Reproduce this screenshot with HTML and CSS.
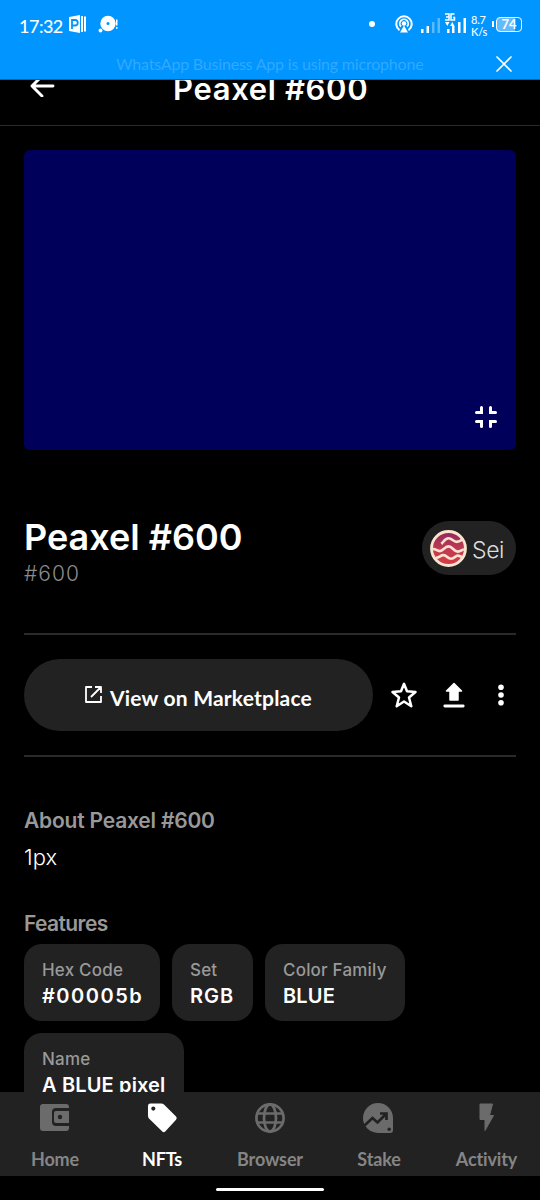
FILE: index.html
```html
<!DOCTYPE html>
<html lang="en">
<head>
<meta charset="utf-8">
<title>Peaxel #600</title>
<link rel="stylesheet" href="styles.css">
</head>
<body>
<div class="screen">
  <header class="system">
    <div class="status">
      <span class="time">17:32</span>
      <svg class="ic-p" width="20" height="20" viewBox="0 0 20 20" fill="#fff"><path d="M1 3 12 1v18L1 17z"/><path d="M13 2h2v16h-2zM16 2.500h2v15h-2z"/><path d="M4 15V6h3a2.700 2.700 0 0 1 0 5.500H4" fill="none" stroke="#0095ff" stroke-width="1.800"/></svg>
      <svg class="ic-disc" width="22" height="20" viewBox="0 0 22 20" fill="#fff"><circle cx="10" cy="9.500" r="7.700"/><circle cx="2.500" cy="16.500" r="1.900"/><circle cx="10" cy="9.500" r="1.500" fill="#0095ff"/><path d="M18 5.500h1.500v6H18zM18 13h1.500v1.800H18z"/></svg>
      <span class="dot"></span>
      <svg class="ic-cast" width="18" height="18" viewBox="0 0 18 18" fill="none" stroke="#fff" stroke-width="2"><path d="M4.500 15.300a7.700 7.700 0 1 1 9 0"/><path d="M6 11.500a4.200 4.200 0 1 1 6 0" stroke-width="1.800"/><circle cx="9" cy="8.500" r="2.200" fill="#fff" stroke="none"/><path d="M9 10.500 13 17.500H5z" fill="#fff" stroke="none"/></svg>
      <svg class="ic-sig" width="46" height="24" viewBox="0 0 46 24" fill="#fff"><path d="M0 19h2.500v4H0zM5.500 16h2.500v7H5.500z"/><path d="M11 12h2.500v11H11zM16.500 8h2.500v15h-2.500z" opacity=".35"/><path d="M26 19h2.500v4H26zM31 16h2.500v7H31zM37 12h2.500v11H37zM42.500 8H45v15h-2.500z"/><path d="M24 4h4v6h-4M25 7h3M33.500 4H30v6h3.500V7.500H32" fill="none" stroke="#fff" stroke-width="1.500"/><path d="M24 12h4.500l-2.200 4zM29 16h4.500l-2.200-4z"/></svg>
      <span class="speed"><span>8.7</span><span>K/s</span></span>
      <i class="battery-tip"></i>
      <span class="battery"><b>74</b></span>
    </div>
    <div class="notice">
      <span>WhatsApp Business App is using microphone</span>
      <svg width="16" height="16" viewBox="0 0 16 16" stroke="#fff" stroke-width="1.700" stroke-linecap="round"><path d="M1 1l14 14M15 1 1 15"/></svg>
    </div>
  </header>

  <div class="appbar">
    <svg class="back" width="25" height="22" viewBox="0 0 25 22" fill="none" stroke="#fff" stroke-width="2.900" stroke-linecap="round" stroke-linejoin="round"><path d="M23 11H2M12 1 2 11l10 10"/></svg>
    <span class="appbar-title">Peaxel #600</span>
  </div>

  <main class="content">
    <div class="preview">
      <svg width="22" height="22" viewBox="0 0 22 22" fill="none" stroke="#fff" stroke-width="3" stroke-linecap="round"><path d="M6.500 1.500v5h-5M15.500 1.500v5h5M6.500 20.500v-5h-5M15.500 20.500v-5h5"/></svg>
    </div>

    <section class="heading">
      <div>
        <h1>Peaxel #600</h1>
        <p class="token">#600</p>
      </div>
      <div class="chain">
        <svg width="37" height="37" viewBox="0 0 36 36">
          <defs><linearGradient id="sei" x1="0" y1="0" x2="0" y2="1"><stop offset="0" stop-color="#8f285f"/><stop offset=".5" stop-color="#bf3a52"/><stop offset="1" stop-color="#d63c45"/></linearGradient></defs>
          <circle cx="18" cy="18" r="16.500" fill="url(#sei)" stroke="#fae4cf" stroke-width="2.800"/>
          <path d="M11 13.500c2.500-2 3.500-5.500 7-5.500s4.500 3.500 8 3.500c2.500 0 4-1 5.500-2.500M3 18.500c3 0 4 2 6.500 2 3.500 0 4.500-4.500 8.500-4.500s5 5 9 5c3 0 4-2 6-2M5.500 27c4 0 4.500-2.500 7.500-2.500 3.500 0 4 3.500 7.500 3.500s4-3 6.500-3c2 0 2.500 1 4 1" fill="none" stroke="#fae4cf" stroke-width="2.600"/>
        </svg>
        <span>Sei</span>
      </div>
    </section>

    <section class="actions">
      <button class="market">
        <svg width="17" height="17" viewBox="0 0 17 17" fill="none" stroke="#fff" stroke-width="1.800" stroke-linejoin="round"><path d="M7 1H1v15h15v-6M10 1h6v6M16 1 6 11"/></svg>
        <span>View on Marketplace</span>
      </button>
      <svg class="star" width="26" height="26" viewBox="0 0 26 26" fill="none" stroke="#fff" stroke-width="2.500" stroke-linejoin="round"><path d="M13 1.800 16 9.300l8.500.7-6.500 5.500 2.300 8.700L13 19.500l-7.300 4.700L8 15.500 1.500 10l8.500-.7z"/></svg>
      <svg class="upload" width="22" height="26" viewBox="0 0 22 26" fill="#fff" stroke="#fff" stroke-linejoin="round" stroke-linecap="round"><path d="M11 1.500 18.500 9H15v9H7V9H3.500z" stroke-width="1.500"/><path d="M1.800 24h18.400" stroke-width="2.800"/></svg>
      <svg class="more" width="6" height="22" viewBox="0 0 6 22" fill="#fff"><circle cx="3" cy="3.300" r="2.800"/><circle cx="3" cy="11" r="2.800"/><circle cx="3" cy="18.700" r="2.800"/></svg>
    </section>

    <section class="about">
      <h2 class="about-title">About Peaxel #600</h2>
      <p>1px</p>
    </section>

    <section class="features">
      <h2 class="features-title">Features</h2>
      <div class="chips">
        <div class="chip hex"><small>Hex Code</small><strong>#00005b</strong></div>
        <div class="chip set"><small>Set</small><strong>RGB</strong></div>
        <div class="chip family"><small>Color Family</small><strong>BLUE</strong></div>
        <div class="chip name"><small>Name</small><strong>A BLUE pixel</strong></div>
      </div>
    </section>
  </main>

  <nav class="tabs">
    <div class="tab"><svg width="30" height="30" viewBox="0 0 30 30"><path d="M3 1h23q3 0 3 3v1H16q-4 0-4 4v10q0 4 4 4h13v2q0 3-3 3H3q-3 0-3-3V4q0-3 3-3zM16 8h13v12H16q-2 0-2-2v-8q0-2 2-2z" fill="currentColor"/><circle cx="20" cy="14" r="2.200" fill="#222"/></svg><span>Home</span></div>
    <div class="tab active"><svg width="31" height="31" viewBox="0 0 31 31"><path d="M3 .5h11q2 0 3 1L29.500 14q1.500 1.700 0 3.300L18.300 29.500q-1.500 1.500-3 0L1.500 16Q.5 15 .5 13V3q0-2.500 2.500-2.500z" fill="currentColor"/><circle cx="6" cy="5.800" r="2.100" fill="#222"/></svg><span>NFTs</span></div>
    <div class="tab"><svg width="30" height="30" viewBox="0 0 30 30" fill="none" stroke="currentColor" stroke-width="2.700"><circle cx="15" cy="15" r="13.600"/><ellipse cx="15" cy="15" rx="6" ry="13.600"/><path d="M2.500 10.500h25M2.500 19.500h25"/></svg><span>Browser</span></div>
    <div class="tab"><svg width="30" height="30" viewBox="0 0 30 30"><path d="M15 0a15 15 0 0 1 15 15v12q0 3-3 3H15a15 15 0 0 1 0-30z" fill="currentColor"/><path d="M1.500 22.500 9.500 15l5 4.500L23 11M17 10.500h6.500V17" fill="none" stroke="#222" stroke-width="2.700"/><circle cx="26.200" cy="26.300" r="1.700" fill="#222"/></svg><span>Stake</span></div>
    <div class="tab"><svg width="30" height="30" viewBox="0 0 30 30" fill="currentColor" stroke="currentColor" stroke-linejoin="round"><path d="M8 1h12.500l-3 11.500h4L13 27.500V16.500H8z"/></svg><span>Activity</span></div>
  </nav>
  <div class="gesture"><i></i></div>
</div>
</body>
</html>
```
FILE: styles.css
```css
* { box-sizing: border-box; margin: 0; padding: 0; }
body { background: #000; color: #fff; font-family: Inter, "Liberation Sans", sans-serif; }
svg { display: block; flex: none; }
span, h1, h2, p, small, strong { white-space: nowrap; }
.screen { width: 540px; height: 1200px; display: flex; flex-direction: column; overflow: hidden; }

.system { height: 80px; flex: none; background: #0095ff; border-bottom: 1px solid #0068b4; font-family: Lato, sans-serif; }
.status { height: 48px; display: flex; align-items: center; padding-left: 19px; }
.time { width: 43px; margin: 3px 6px 0 0; font-size: 18px; font-weight: 500; letter-spacing: -.5px; }
.ic-disc { margin-left: 10px; }
.dot { width: 6px; height: 6px; margin-left: 249px; border-radius: 50%; background: #fff; }
.ic-cast { margin-left: 20px; }
.ic-sig { margin: 0 0 4px 8px; }
.speed { width: 17px; margin: 4px 0 0 4px; font-size: 11px; line-height: 12px; font-weight: 500; letter-spacing: -.2px; display: flex; flex-direction: column; }
.battery-tip { width: 2px; height: 6px; margin-left: 4px; background: #fff; }
.battery { width: 26px; height: 15px; margin-left: 2px; border: 1.500px solid #fff; border-radius: 4px; background: linear-gradient(90deg, #62bbff 74%, #0095ff 74%); display: flex; align-items: center; justify-content: center; font-size: 13px; line-height: 13px; }
.notice { height: 31px; display: flex; align-items: center; justify-content: space-between; padding: 1px 28px 0 116px; font-size: 16px; letter-spacing: -.2px; color: #30a9ff; }
.notice span { margin-top: -2px; }

.appbar { height: 46px; flex: none; border-bottom: 1px solid #2a2a2a; overflow: hidden; display: flex; align-items: flex-start; padding-left: 29px; }
.back { margin: -5px 0 0 1px; }
.appbar-title { margin: -9px 0 0 118px; font-size: 31px; line-height: 36px; font-weight: 600; letter-spacing: .65px; }

.content { height: 966px; flex: none; padding: 24px 24px 0; overflow: hidden; }
.preview { height: 300px; border-radius: 6px; background: #00005b; display: flex; align-items: flex-end; justify-content: flex-end; padding: 0 19px 22px; }
.heading { height: 185px; border-bottom: 2px solid #2a2a2a; display: flex; justify-content: space-between; padding-top: 67px; }
h1 { font-size: 36px; line-height: 40px; font-weight: 600; }
.token { margin-top: 4px; font-size: 21px; line-height: 26px; font-weight: 300; letter-spacing: 1px; color: #8b8b8b; }
.chain { width: 94px; height: 54px; margin-top: 4px; border-radius: 27px; background: #222; display: flex; align-items: center; padding-left: 8px; gap: 5px; font-size: 23px; font-weight: 300; letter-spacing: -.4px; color: #ddd; }
.chain span { margin-top: 3px; }
.actions { height: 122px; border-bottom: 2px solid #2a2a2a; display: flex; align-items: center; }
.market { width: 349px; height: 72px; border: 0; border-radius: 36px; background: #222; color: #fff; display: flex; align-items: center; justify-content: center; gap: 8px; font: 700 21px Lato, sans-serif; letter-spacing: .2px; }
.market svg { margin-bottom: 1px; }
.market span { margin-top: 5px; }
.star { margin-left: 18px; }
.upload { margin-left: 26px; }
.more { margin-left: 33px; }
.about { height: 154px; padding-top: 51px; }
h2 { font-size: 21px; line-height: 26px; font-weight: 600; color: #999; }
.about-title { letter-spacing: -.2px; }
.features-title { letter-spacing: -.6px; }
.about p { margin-top: 9px; font-size: 22px; line-height: 28px; font-weight: 300; }
.chips { display: flex; flex-wrap: wrap; gap: 12px; margin-top: 6.500px; }
.chip { height: 77px; padding: 14.500px 0 0 18px; border-radius: 18px; background: #222; display: flex; flex-direction: column; }
.chip small { font-size: 17px; line-height: 24px; font-weight: 500; letter-spacing: .2px; color: #999; }
.chip strong { font-size: 20px; line-height: 28px; font-weight: 600; letter-spacing: .15px; }
.hex { width: 136px; }
.hex strong { letter-spacing: 1.500px; }
.set { width: 81px; }
.set strong { letter-spacing: 1px; }
.family { width: 140px; }
.name { width: 160px; }

.tabs { height: 84px; flex: none; background: #222; display: grid; grid-template-columns: repeat(5, 108px); font: 700 18px Lato, sans-serif; letter-spacing: -.15px; color: #6b6b6b; }
.tab { padding-top: 11px; display: flex; flex-direction: column; align-items: center; }
.tab:first-child { padding-left: 2px; }
.tab:nth-child(4) span { padding-left: 2px; }
.tab:last-child { padding-left: 1px; }
.tab svg { height: 30px; }
.tab span { margin-top: 14px; line-height: 24px; color: #858585; }
.tab.active, .tab.active span { color: #fff; }
.gesture { height: 24px; flex: none; display: flex; justify-content: center; padding-top: 12px; }
.gesture i { width: 108px; height: 3px; border-radius: 2px; background: #fff; }
```
